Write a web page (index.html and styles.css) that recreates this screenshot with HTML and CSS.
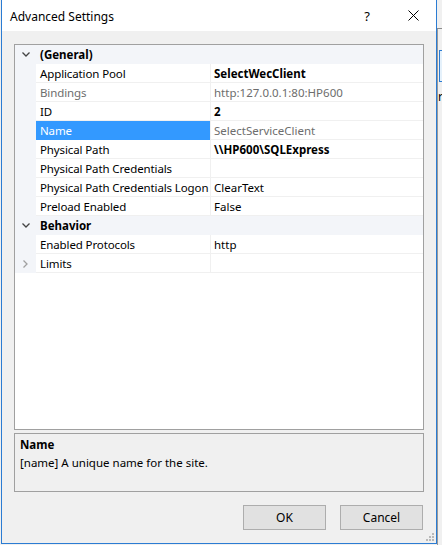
FILE: index.html
```html
<!DOCTYPE html>
<html>
<head>
<meta charset="utf-8">
<link rel="stylesheet" href="styles.css">
</head>
<body>
<div class="screen">
  <div class="dialog">
    <div class="titlebar">
      <span class="title">Advanced Settings</span>
      <span class="help-btn">?</span>
      <span class="close-btn">
        <svg width="11" height="11" viewBox="0 0 11 11"><path d="M0.5 0.5 L10.5 10.5 M10.5 0.5 L0.5 10.5" stroke="#000" stroke-width="1" fill="none"/></svg>
      </span>
    </div>
    <div class="client">
      <div class="grid">
        <div class="row cat">
          <span class="gutter"><svg width="8" height="5" viewBox="0 0 8 5"><path d="M0.5 0.5 L4 4 L7.5 0.5" stroke="#444" stroke-width="1.3" fill="none"/></svg></span>
          <span class="cat-name">(General)</span>
        </div>
        <div class="row"><span class="gutter"></span><span class="name">Application Pool</span><span class="value bold">SelectWecClient</span></div>
        <div class="row"><span class="gutter"></span><span class="name grey">Bindings</span><span class="value grey">http:127.0.0.1:80:HP600</span></div>
        <div class="row"><span class="gutter"></span><span class="name">ID</span><span class="value bold">2</span></div>
        <div class="row"><span class="gutter"></span><span class="name selected">Name</span><span class="value grey">SelectServiceClient</span></div>
        <div class="row"><span class="gutter"></span><span class="name">Physical Path</span><span class="value bold">\\HP600\SQLExpress</span></div>
        <div class="row"><span class="gutter"></span><span class="name">Physical Path Credentials</span><span class="value"></span></div>
        <div class="row"><span class="gutter"></span><span class="name">Physical Path Credentials Logon</span><span class="value">ClearText</span></div>
        <div class="row"><span class="gutter"></span><span class="name">Preload Enabled</span><span class="value">False</span></div>
        <div class="row cat">
          <span class="gutter"><svg width="8" height="5" viewBox="0 0 8 5"><path d="M0.5 0.5 L4 4 L7.5 0.5" stroke="#444" stroke-width="1.3" fill="none"/></svg></span>
          <span class="cat-name">Behavior</span>
        </div>
        <div class="row"><span class="gutter"></span><span class="name">Enabled Protocols</span><span class="value">http</span></div>
        <div class="row"><span class="gutter"><svg width="5" height="8" viewBox="0 0 5 8"><path d="M0.5 0.5 L4 4 L0.5 7.5" stroke="#a0a0a0" stroke-width="1.3" fill="none"/></svg></span><span class="name">Limits</span><span class="value"></span></div>
      </div>
      <div class="helpbox">
        <div class="help-title">Name</div>
        <div class="help-text">[name] A unique name for the site.</div>
      </div>
      <div class="buttons">
        <button class="btn">OK</button>
        <button class="btn">Cancel</button>
      </div>
    </div>
    <svg class="grip" width="8" height="8" viewBox="0 0 8 8">
      <rect x="6" y="0" width="2" height="2" fill="#b9b9b9"/>
      <rect x="3" y="3" width="2" height="2" fill="#b9b9b9"/>
      <rect x="6" y="3" width="2" height="2" fill="#b9b9b9"/>
      <rect x="0" y="6" width="2" height="2" fill="#b9b9b9"/>
      <rect x="3" y="6" width="2" height="2" fill="#b9b9b9"/>
      <rect x="6" y="6" width="2" height="2" fill="#b9b9b9"/>
    </svg>
  </div>
  <div class="behind">
    <div class="behind-top"></div>
    <div class="behind-body">
      <div class="behind-btn"></div>
      <div class="behind-text">r</div>
    </div>
  </div>
</div>
</body>
</html>
```

FILE: styles.css
```css
html, body {
  margin: 0;
  padding: 0;
  background: #f0f0f0;
  font-family: "Noto Sans", "Open Sans", sans-serif;
  font-size: 11.5px;
  color: #000;
}
.screen {
  display: flex;
  width: 442px;
  height: 545px;
  overflow: hidden;
  padding-left: 1px;
  box-sizing: border-box;
}
.dialog {
  position: relative;
  width: 436px;
  height: 544px;
  box-sizing: border-box;
  border: 1px solid #2b7cd3;
  border-top: none;
  background: #f0f0f0;
  display: flex;
  flex-direction: column;
  flex: none;
}
.titlebar {
  height: 31px;
  background: #fff;
  display: flex;
  align-items: center;
  flex: none;
}
.title {
  margin-left: 8px;
  flex: 1;
  font-size: 12px;
  line-height: 16px;
  padding-top: 2px;
}
.help-btn {
  width: 12px;
  text-align: center;
  font-size: 13px;
  margin-right: 35px;
  padding-top: 1px;
}
.close-btn {
  display: flex;
  margin-right: 17px;
}
.client {
  flex: 1;
  display: flex;
  flex-direction: column;
  padding: 13px 12px 0 12px;
}
.grid {
  height: 386px;
  box-sizing: border-box;
  border: 1px solid #a0a0a0;
  background: #fff;
  flex: none;
}
.row {
  display: flex;
  height: 19px;
  line-height: 17px;
}
.gutter {
  width: 21px;
  flex: none;
  background: #f3f5f9;
  display: flex;
  align-items: center;
  justify-content: center;
}
.row.cat {
  background: #f3f5f9;
  height: 19px;
}
.cat-name {
  font-weight: bold;
  padding: 1px 0 0 4px;
}
.name {
  width: 174px;
  flex: none;
  box-sizing: border-box;
  padding: 1px 0 0 4px;
  letter-spacing: -0.12px;
  border-bottom: 1px solid #f0f0f0;
  white-space: nowrap;
  overflow: hidden;
}
.name.selected {
  background: #3399ff;
  color: #fff;
  border-bottom-color: #3399ff;
}
.value {
  flex: 1;
  padding: 1px 0 0 3px;
  border-left: 1px solid #f0f0f0;
  border-bottom: 1px solid #f0f0f0;
  white-space: nowrap;
}
.bold {
  font-weight: bold;
}
.grey {
  color: #6d6d6d;
}
.helpbox {
  margin-top: 3px;
  height: 59px;
  box-sizing: border-box;
  border: 1px solid #a0a0a0;
  padding: 2px 0 0 5px;
  flex: none;
}
.help-title {
  font-weight: bold;
  line-height: 18px;
}
.help-text {
  line-height: 18px;
}
.buttons {
  margin-top: 13px;
  margin-right: 1px;
  display: flex;
  justify-content: flex-end;
  gap: 14px;
}
.btn {
  width: 83px;
  height: 25px;
  box-sizing: border-box;
  background: #e1e1e1;
  border: 1px solid #adadad;
  font-family: "Noto Sans", "Open Sans", sans-serif;
  font-size: 12px;
  color: #000;
  padding: 0 0 1px 0;
  margin: 0;
}
.grip {
  position: absolute;
  right: 2px;
  bottom: 2px;
}
.behind {
  flex: 1;
  display: flex;
  flex-direction: column;
}
.behind-top {
  height: 28px;
  border-bottom: 1px solid #8c8c8c;
}
.behind-body {
  flex: 1;
  border-left: 1px solid #9a9a9a;
  padding-left: 0;
}
.behind-btn {
  margin-top: 21px;
  height: 30px;
  border: 1px solid #2b7cd3;
  border-right: none;
  background: #e5f1fb;
  margin-left: 1px;
}
.behind-text {
  margin-top: 8px;
  font-size: 12px;
  line-height: 14px;
}
```
